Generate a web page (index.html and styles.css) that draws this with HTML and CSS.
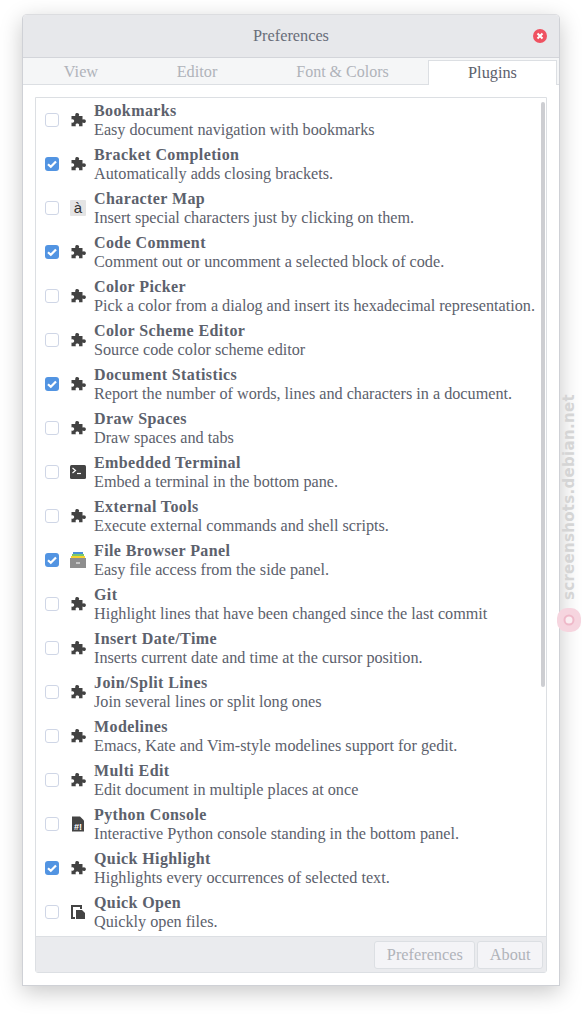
FILE: index.html
```html
<!DOCTYPE html>
<html lang="en">
<head>
  <meta charset="UTF-8">
  <title>Preferences</title>
  <link rel="stylesheet" href="styles.css">
</head>
<body>
  <svg class="defs" width="0" height="0">
    <symbol id="puzzle" viewBox="0 0 16 16">
      <path d="M6 1.200c1.600-.9 3.400.2 3.100 1.800-.1.500-.3.800-.3 1.100h3.700v3.400c.4 0 .8-.3 1.300-.3 1.600 0 2.400 1.200 2 2.500-.4 1.300-2 1.600-3.300.9v3.700h-3.600c0-.5.400-.8.300-1.400-.2-1.200-1.300-1.700-2.400-1.400-1.200.3-1.500 1.500-.9 2.800H1.500v-3.700c1 .4 2.100.2 2.500-.8.500-1.200-.2-2.600-1.500-2.600-.4 0-.7.1-1 .3V4.100h3.700C5.300 3.200 5.100 1.800 6 1.200z"/>
    </symbol>
  </svg>

  <div class="window">
    <div class="titlebar">
      <span class="title">Preferences</span>
      <svg class="close" width="14" height="14" viewBox="0 0 14 14">
        <circle cx="7" cy="7" r="7" fill="#ef5261"/>
        <path d="M4.500 4.500l5 5m0-5l-5 5" stroke="#fff" stroke-width="2"/>
      </svg>
    </div>

    <div class="tabs">
      <div class="tab tab-view">View</div>
      <div class="tab tab-editor">Editor</div>
      <div class="tab tab-font">Font &amp; Colors</div>
      <div class="tab tab-plugins active">Plugins</div>
    </div>

    <div class="page">
      <div class="panel">
        <div class="list">
          <div class="scrollbar"></div>

          <div class="row">
            <span class="check"></span>
            <svg class="icon"><use href="#puzzle"/></svg>
            <div class="text"><b>Bookmarks</b><span>Easy document navigation with bookmarks</span></div>
          </div>
          <div class="row">
            <span class="check on"><svg width="14" height="14" viewBox="0 0 14 14"><path d="M3 7.200l2.800 2.600L11 4.400" fill="none" stroke="#fff" stroke-width="2.200"/></svg></span>
            <svg class="icon"><use href="#puzzle"/></svg>
            <div class="text"><b>Bracket Completion</b><span>Automatically adds closing brackets.</span></div>
          </div>
          <div class="row">
            <span class="check"></span>
            <span class="icon charmap">à</span>
            <div class="text"><b>Character Map</b><span>Insert special characters just by clicking on them.</span></div>
          </div>
          <div class="row">
            <span class="check on"><svg width="14" height="14" viewBox="0 0 14 14"><path d="M3 7.200l2.800 2.600L11 4.400" fill="none" stroke="#fff" stroke-width="2.200"/></svg></span>
            <svg class="icon"><use href="#puzzle"/></svg>
            <div class="text"><b>Code Comment</b><span>Comment out or uncomment a selected block of code.</span></div>
          </div>
          <div class="row">
            <span class="check"></span>
            <svg class="icon"><use href="#puzzle"/></svg>
            <div class="text"><b>Color Picker</b><span>Pick a color from a dialog and insert its hexadecimal representation.</span></div>
          </div>
          <div class="row">
            <span class="check"></span>
            <svg class="icon"><use href="#puzzle"/></svg>
            <div class="text"><b>Color Scheme Editor</b><span>Source code color scheme editor</span></div>
          </div>
          <div class="row">
            <span class="check on"><svg width="14" height="14" viewBox="0 0 14 14"><path d="M3 7.200l2.800 2.600L11 4.400" fill="none" stroke="#fff" stroke-width="2.200"/></svg></span>
            <svg class="icon"><use href="#puzzle"/></svg>
            <div class="text"><b>Document Statistics</b><span>Report the number of words, lines and characters in a document.</span></div>
          </div>
          <div class="row">
            <span class="check"></span>
            <svg class="icon"><use href="#puzzle"/></svg>
            <div class="text"><b>Draw Spaces</b><span>Draw spaces and tabs</span></div>
          </div>
          <div class="row">
            <span class="check"></span>
            <svg class="icon" viewBox="0 0 16 16">
              <rect y="1" width="16" height="14" rx="1.500" fill="#444"/>
              <path d="M2.500 4l3 2.500-3 2.500" fill="none" stroke="#fff" stroke-width="1.200"/>
              <path d="M7 9.500h4" stroke="#fff" stroke-width="1.200"/>
            </svg>
            <div class="text"><b>Embedded Terminal</b><span>Embed a terminal in the bottom pane.</span></div>
          </div>
          <div class="row">
            <span class="check"></span>
            <svg class="icon"><use href="#puzzle"/></svg>
            <div class="text"><b>External Tools</b><span>Execute external commands and shell scripts.</span></div>
          </div>
          <div class="row">
            <span class="check on"><svg width="14" height="14" viewBox="0 0 14 14"><path d="M3 7.200l2.800 2.600L11 4.400" fill="none" stroke="#fff" stroke-width="2.200"/></svg></span>
            <svg class="icon" viewBox="0 0 16 16">
              <rect x="3" y="0" width="10" height="3" fill="#4a90d9"/>
              <rect x="2" y="2" width="12" height="2" fill="#7bc86c"/>
              <rect x="1" y="4" width="14" height="2" fill="#f6d32d"/>
              <rect y="6" width="16" height="10" fill="#8e8e8e"/>
              <path d="M6 11h4" stroke="#fff" stroke-width="1"/>
            </svg>
            <div class="text"><b>File Browser Panel</b><span>Easy file access from the side panel.</span></div>
          </div>
          <div class="row">
            <span class="check"></span>
            <svg class="icon"><use href="#puzzle"/></svg>
            <div class="text"><b>Git</b><span>Highlight lines that have been changed since the last commit</span></div>
          </div>
          <div class="row">
            <span class="check"></span>
            <svg class="icon"><use href="#puzzle"/></svg>
            <div class="text"><b>Insert Date/Time</b><span>Inserts current date and time at the cursor position.</span></div>
          </div>
          <div class="row">
            <span class="check"></span>
            <svg class="icon"><use href="#puzzle"/></svg>
            <div class="text"><b>Join/Split Lines</b><span>Join several lines or split long ones</span></div>
          </div>
          <div class="row">
            <span class="check"></span>
            <svg class="icon"><use href="#puzzle"/></svg>
            <div class="text"><b>Modelines</b><span>Emacs, Kate and Vim-style modelines support for gedit.</span></div>
          </div>
          <div class="row">
            <span class="check"></span>
            <svg class="icon"><use href="#puzzle"/></svg>
            <div class="text"><b>Multi Edit</b><span>Edit document in multiple places at once</span></div>
          </div>
          <div class="row">
            <span class="check"></span>
            <svg class="icon" viewBox="0 0 16 16">
              <path d="M2 .5h8l4 4v11H2z" fill="#444"/>
              <text x="8" y="13.500" class="shebang">#!</text>
            </svg>
            <div class="text"><b>Python Console</b><span>Interactive Python console standing in the bottom panel.</span></div>
          </div>
          <div class="row">
            <span class="check on"><svg width="14" height="14" viewBox="0 0 14 14"><path d="M3 7.200l2.800 2.600L11 4.400" fill="none" stroke="#fff" stroke-width="2.200"/></svg></span>
            <svg class="icon"><use href="#puzzle"/></svg>
            <div class="text"><b>Quick Highlight</b><span>Highlights every occurrences of selected text.</span></div>
          </div>
          <div class="row">
            <span class="check"></span>
            <svg class="icon" viewBox="0 0 16 16">
              <path d="M1 1h11v4h-2V3H3v10h2v2H1z" fill="#444"/>
              <path d="M6 6h6l3 3v6H6z" fill="#444"/>
            </svg>
            <div class="text"><b>Quick Open</b><span>Quickly open files.</span></div>
          </div>
        </div>

        <div class="footer">
          <div class="btn">Preferences</div>
          <div class="btn">About</div>
        </div>
      </div>
    </div>
  </div>

  <div class="watermark">
    <span>screenshots.debian.net</span>
    <svg width="26" height="26" viewBox="0 0 26 26">
      <rect x="1" y="1" width="24" height="24" rx="10" fill="#f6d5df"/>
      <circle cx="13" cy="13" r="4.500" fill="#fbeef2" stroke="#efb9c9" stroke-width="2"/>
    </svg>
  </div>
</body>
</html>
```

FILE: styles.css
```css
* {
  box-sizing: border-box;
}

body {
  font-family: "Liberation Serif", serif;
  background: #fff;
  margin: 0;
  padding: 14px 22px 0;
  color: #5c616c;
  height: 1016px;
  overflow: hidden;
  position: relative;
}

.defs {
  position: absolute;
}

.window {
  width: 538px;
  height: 972px;
  background: #fff;
  border: 1px solid #cfd1d6;
  border-top-color: #dcdde0;
  border-radius: 5px 5px 0 0;
  box-shadow: 0 6px 22px rgba(0, 0, 0, 0.22);
  display: flex;
  flex-direction: column;
}

/* title bar */
.titlebar {
  height: 43px;
  flex: none;
  background: #e7e8eb;
  border-bottom: 1px solid #d3d5da;
  border-radius: 4px 4px 0 0;
  display: flex;
  align-items: center;
  justify-content: center;
  position: relative;
}

.title {
  font-size: 16.300px;
  color: #696e7a;
}

.close {
  position: absolute;
  right: 12px;
  top: 14px;
}

/* tabs */
.tabs {
  height: 27px;
  flex: none;
  display: flex;
  background: #f5f6f7;
  border-bottom: 1px solid #dcdfe3;
  font-size: 16.300px;
}

.tab {
  color: #b0b3ba;
  text-align: center;
  line-height: 27px;
}

.tab-view {
  width: 116px;
}

.tab-editor {
  width: 116px;
}

.tab-font {
  width: 173px;
  padding-left: 2px;
  font-size: 16px;
}

.tab-plugins {
  width: 129px;
}

.tab.active {
  height: 25px;
  margin-top: 2px;
  line-height: 23px;
  background: #fff;
  color: #5c616c;
  border: 1px solid #dcdfe3;
  border-bottom: none;
  position: relative;
}

/* white tab covers the line under it */
.tab.active::after {
  content: "";
  position: absolute;
  left: 0;
  right: 0;
  bottom: -1px;
  height: 1px;
  background: #fff;
}

/* plugin list */
.page {
  flex: 1;
  padding: 12px;
  min-height: 0;
}

.panel {
  height: 100%;
  border: 1px solid #dcdfe3;
  border-radius: 0 0 3px 3px;
  display: flex;
  flex-direction: column;
}

.list {
  flex: 1;
  min-height: 0;
  overflow: hidden;
  position: relative;
}

.scrollbar {
  position: absolute;
  top: 4px;
  right: 1px;
  width: 4px;
  height: 585px;
  background: #cdced2;
  border-radius: 2px;
}

.row {
  height: 44px;
  display: flex;
  align-items: center;
  padding-left: 9px;
}

.check {
  width: 14px;
  height: 14px;
  flex: none;
  background: #fff;
  border: 1px solid #cfd6e6;
  border-radius: 3px;
  margin-right: 11px;
}

.check.on {
  background: #5294e2;
  border: none;
}

.check svg {
  display: block;
}

.icon {
  width: 16px;
  height: 16px;
  flex: none;
  fill: #424242;
  margin-right: 8px;
}

.shebang {
  font-family: "Liberation Sans", sans-serif;
  font-size: 9px;
  font-weight: bold;
  fill: #fff;
  text-anchor: middle;
}

.charmap {
  background: #e4e4e4;
  color: #333;
  font-family: "Liberation Sans", sans-serif;
  font-size: 15px;
  line-height: 15px;
  text-align: center;
  border-radius: 1px;
}

.text {
  display: flex;
  flex-direction: column;
  padding-top: 1px;
  white-space: nowrap;
  font-size: 16.200px;
  line-height: 19px;
}

.text b {
  font-size: 16px;
  letter-spacing: 0.4px;
  margin-bottom: 1px;
}

/* footer */
.footer {
  height: 36px;
  flex: none;
  background: #eaebee;
  border-top: 1px solid #dcdfe3;
  display: flex;
  justify-content: flex-end;
  align-items: center;
  gap: 2px;
  padding-right: 3px;
}

.btn {
  height: 28px;
  line-height: 26px;
  padding: 0 11.500px;
  font-size: 16.300px;
  color: #b0b3ba;
  background: #f4f4f7;
  border: 1px solid #dcdfe3;
  border-radius: 3px;
}

/* watermark on the right edge */
.watermark {
  position: absolute;
  left: 556px;
  top: 394px;
  width: 26px;
  height: 240px;
  display: flex;
  flex-direction: column;
  align-items: center;
}

.watermark span {
  writing-mode: vertical-rl;
  transform: rotate(180deg);
  font-family: "DejaVu Sans", sans-serif;
  font-weight: bold;
  font-size: 15px;
  letter-spacing: 0.300px;
  color: #d5d5d5;
  height: 206px;
  line-height: 26px;
  white-space: nowrap;
}

.watermark svg {
  margin-top: 7px;
}
```
